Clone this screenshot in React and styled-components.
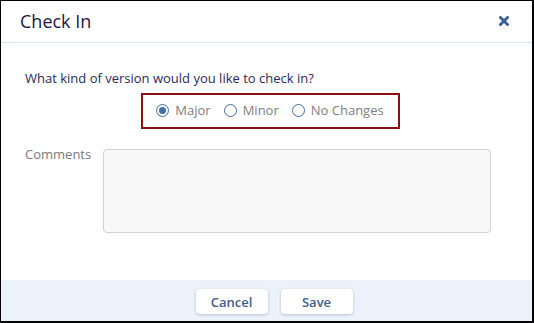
import React from "react";
import styled, { createGlobalStyle } from "styled-components";

const Global = createGlobalStyle`
  html, body {
    margin: 0;
    padding: 0;
    background: #ffffff;
  }
  body {
    font-family: "Open Sans", "Liberation Sans", sans-serif;
  }
`;

// Dialog window with the black frame
const Dialog = styled.div`
  box-sizing: border-box;
  width: 534px;
  height: 323px;
  border-style: solid;
  border-color: #000;
  border-width: 1px 2px 2px 1px;
  display: flex;
  flex-direction: column;
  background: #fff;
`;

const Header = styled.header`
  height: 41px;
  flex: none;
  display: flex;
  align-items: center;
  justify-content: space-between;
  padding: 0 23px 0 19px;
  border-bottom: 1px solid #d6e2ed;
`;

const Title = styled.h1`
  margin: 0;
  font-size: 18px;
  font-weight: 500;
  color: #1b1747;
  line-height: 24px;
  padding-bottom: 1px;
`;

const CloseButton = styled.button`
  border: none;
  background: none;
  padding: 0;
  width: 10px;
  height: 10px;
  display: flex;
  cursor: pointer;
  margin-bottom: 1px;
`;

const Body = styled.section`
  flex: 1;
  padding: 26px 24px 0 24px;
  display: flex;
  flex-direction: column;
`;

const Question = styled.p`
  margin: 0;
  font-size: 13px;
  line-height: 18px;
  color: #2c295c;
`;

const GroupRow = styled.div`
  display: flex;
  justify-content: center;
  padding-left: 8px;
  margin-top: 6px;
`;

const RadioGroup = styled.div`
  box-sizing: border-box;
  height: 36px;
  border: 2px solid #8c1014;
  display: flex;
  align-items: center;
  gap: 13px;
  padding: 0 14px 2px 13px;
`;

const RadioLabel = styled.label`
  display: flex;
  align-items: center;
  gap: 6px;
  font-size: 13px;
  line-height: 18px;
  color: #808080;
  cursor: pointer;
`;

const RadioCircle = styled.span`
  box-sizing: border-box;
  width: 13px;
  height: 13px;
  border-radius: 50%;
  border: 1px solid #3f6ea8;
  display: flex;
  align-items: center;
  justify-content: center;
  background: #fff;

  &::after {
    content: "";
    width: 7px;
    height: 7px;
    border-radius: 50%;
    background: ${(p) => (p.$checked ? "#3f6ea8" : "transparent")};
  }
`;

const CommentRow = styled.div`
  display: flex;
  align-items: flex-start;
  margin-top: 20px;
`;

const CommentLabel = styled.span`
  width: 78px;
  flex: none;
  font-size: 13px;
  line-height: 18px;
  color: #7a7a7a;
  margin-top: -4px;
`;

const CommentBox = styled.div`
  box-sizing: border-box;
  width: 388px;
  height: 84px;
  background: #f8f8f8;
  border: 1px solid #d2d2d2;
  border-radius: 4px;
`;

const Footer = styled.footer`
  flex: none;
  height: 41px;
  box-sizing: border-box;
  background: #ebf2f9;
  display: flex;
  justify-content: center;
  align-items: flex-start;
  gap: 13px;
  padding: 9px 0 0 15px;
`;

const Button = styled.button`
  width: 72px;
  height: 25px;
  border: none;
  border-radius: 4px;
  background: #fff;
  box-shadow: 0 1px 3px rgba(30, 50, 90, 0.25);
  font-family: "Open Sans", "Liberation Sans", sans-serif;
  font-size: 13px;
  font-weight: 600;
  color: #3d5d8e;
  padding: 0;
  cursor: pointer;
`;

const options = [
  { id: "major", label: "Major", checked: true },
  { id: "minor", label: "Minor", checked: false },
  { id: "none", label: "No Changes", checked: false },
];

export default function App() {
  return (
    <>
      <Global />
      <Dialog>
        <Header>
          <Title>Check In</Title>
          <CloseButton aria-label="Close">
            <svg width="10" height="10" viewBox="0 0 10 10">
              <path
                d="M1.5 1.5 L8.5 8.5 M8.5 1.5 L1.5 8.5"
                stroke="#3a5f95"
                strokeWidth="2.8"
                strokeLinecap="square"
              />
            </svg>
          </CloseButton>
        </Header>
        <Body>
          <Question>What kind of version would you like to check in?</Question>
          <GroupRow>
            <RadioGroup>
              {options.map((o) => (
                <RadioLabel key={o.id}>
                  <RadioCircle $checked={o.checked} />
                  {o.label}
                </RadioLabel>
              ))}
            </RadioGroup>
          </GroupRow>
          <CommentRow>
            <CommentLabel>Comments</CommentLabel>
            <CommentBox />
          </CommentRow>
        </Body>
        <Footer>
          <Button>Cancel</Button>
          <Button>Save</Button>
        </Footer>
      </Dialog>
    </>
  );
}
